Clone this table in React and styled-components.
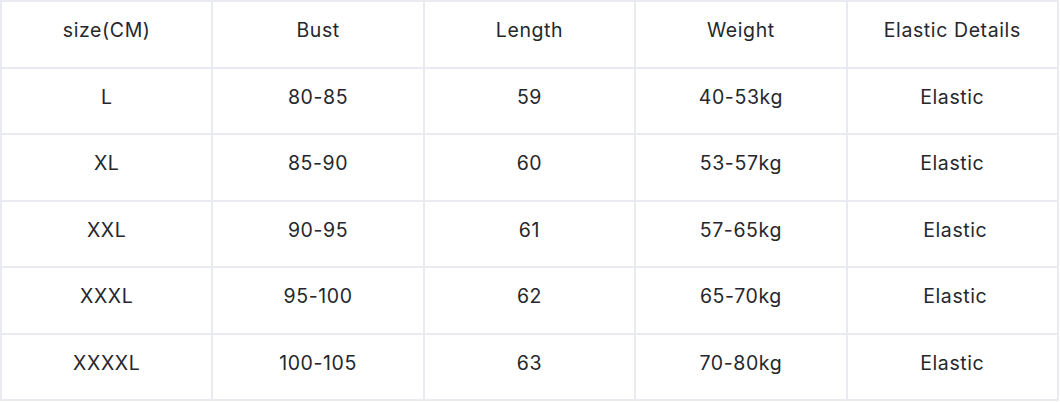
import React from "react";
import styled, { createGlobalStyle } from "styled-components";

const Global = createGlobalStyle`
  html, body { margin: 0; padding: 0; background: #ffffff; }
  body { font-family: "Inter", "Open Sans", sans-serif; }
`;

const Table = styled.table`
  width: 1059px;
  border-collapse: collapse;
  table-layout: fixed;
  color: #25272d;
  font-family: "Inter", "Open Sans", sans-serif;
  font-size: 19.5px;
  font-weight: 400;
`;

const Cell = styled.td`
  border: 2px solid #e9ebf1;
  height: 56.5px;
  padding: 0 0 8px ${(p) => (p.$shift ? "6px" : "0")};
  text-align: center;
  vertical-align: middle;
  letter-spacing: 0.6px;
`;

const header = ["size(CM)", "Bust", "Length", "Weight", "Elastic Details"];
const rows = [
  ["L", "80-85", "59", "40-53kg", "Elastic"],
  ["XL", "85-90", "60", "53-57kg", "Elastic"],
  ["XXL", "90-95", "61", "57-65kg", "Elastic", true],
  ["XXXL", "95-100", "62", "65-70kg", "Elastic", true],
  ["XXXXL", "100-105", "63", "70-80kg", "Elastic"],
];

export default function App() {
  return (
    <>
      <Global />
      <Table>
        <tbody>
          <tr>
            {header.map((h) => (
              <Cell key={h}>{h}</Cell>
            ))}
          </tr>
          {rows.map((r) => (
            <tr key={r[0]}>
              {r.slice(0, 5).map((c, i) => (
                <Cell key={i} $shift={i === 4 && r[5]}>
                  {c}
                </Cell>
              ))}
            </tr>
          ))}
        </tbody>
      </Table>
    </>
  );
}
